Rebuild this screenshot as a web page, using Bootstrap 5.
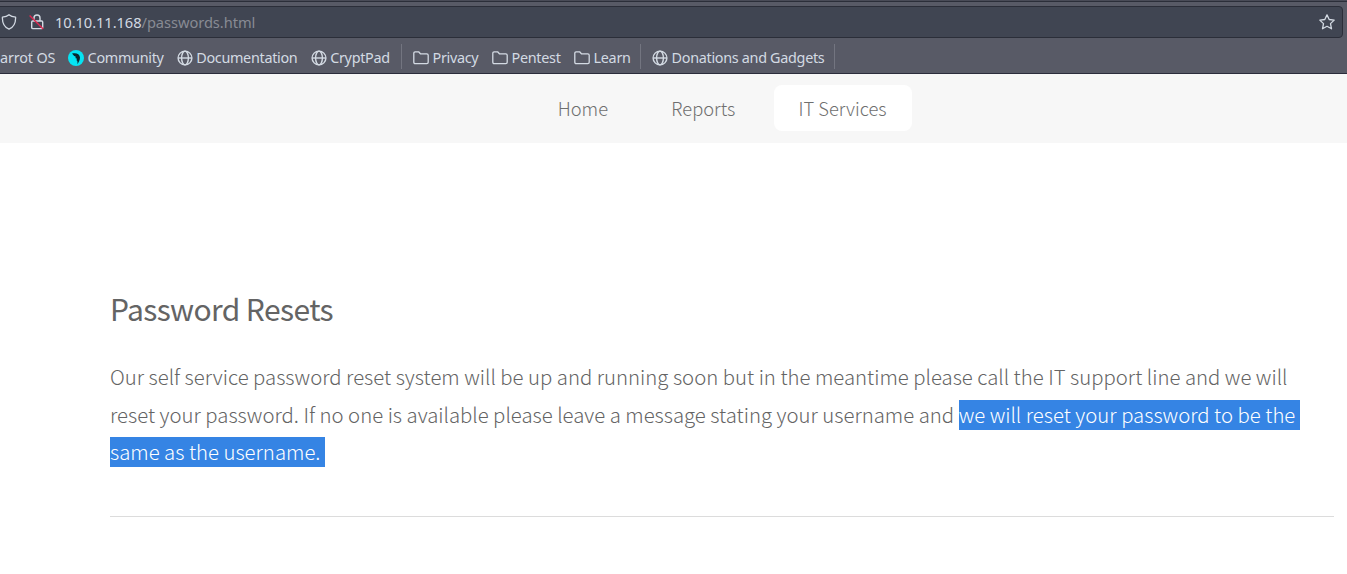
<!DOCTYPE html>
<html lang="en">
<head>
<meta charset="utf-8">
<meta name="viewport" content="width=device-width, initial-scale=1">
<title>Password Resets</title>
<link href="https://cdn.jsdelivr.net/npm/bootstrap@5.3.0/dist/css/bootstrap.min.css" rel="stylesheet">
<style>
body{background:#fff;overflow:hidden;height:574px}
.chrome{height:74px;background:#585a66;border-top:1px solid #494b57;border-bottom:1px solid #2b2c3b;font-family:"Noto Sans",sans-serif;color:#d3dae3}
.chrome svg{fill:none;stroke:#d3dae3;flex:none}
.edge{height:1px;background:#2b2e39}
.url{height:32px;margin:4px 4px 0 -6px;background:#404552;border:1px solid #2b2e39;border-radius:4px;font-size:14.67px;padding-left:6px;padding-right:7px}
.url .path{color:#888b94}
.lock{margin-left:12px}
.addr{margin-left:10px;letter-spacing:-.06px}
.marks{height:35px;padding-top:2px;font-size:14.4px;letter-spacing:-.31px;white-space:nowrap}
.marks .nav-link{gap:3.6px;padding:2px 0 0;line-height:20px;color:inherit;flex:none}
.sep{width:1px;height:25px;background:#737580;flex:none}
.sep + .nav-link{margin-left:11px}
.w1{width:68px;letter-spacing:-.15px}.w2{width:108.6px}.w3{width:134px}.w4{width:90.4px}.w5{width:79px}.w6{width:82px}.w7{width:66px}.w8{width:182px}
.sitenav{height:69px;background:#f7f7f7;font-family:"Noto Sans CJK SC",sans-serif;font-weight:300;font-size:18.33px;padding:0 0 2px 98px;gap:13.3px}
.sitenav .nav-link{color:#6f6f6f;height:46px;padding:0 25px;line-height:46px;border-radius:8px}
.sitenav .active{background:#fff;padding-right:25.7px}
.content{margin:0 13px 0 110px;font-family:"Noto Sans CJK SC",sans-serif;color:#646464}
.content h2{font-size:30px;font-weight:400;line-height:45px;margin:143px 0 0;letter-spacing:-.6px}
.content p{font-size:20.33px;font-weight:300;line-height:37.5px;margin:27px 0 0;white-space:pre}
.picked{padding-bottom:1px;background:linear-gradient(#3584e4,#3584e4) 0 100%/100% 30px no-repeat;color:#fff}
.content hr{margin:45px 0 0;opacity:1;border-top:1px solid #dcdcdc}
</style>
</head>
<body>
<svg class="d-none"><symbol id="globe" viewBox="0 0 16 16"><g stroke-width="1.4"><circle cx="8" cy="8" r="6.9"/><ellipse cx="8" cy="8" rx="3.4" ry="6.9"/><path d="M1.2 8h13.6"/></g></symbol>
<symbol id="folder" viewBox="0 0 16 16"><path stroke-width="1.3" stroke-linejoin="round" d="M.8 3.2Q.8 1.8 2.2 1.8H5.6L7.4 3.8H13.8Q15.2 3.8 15.2 5.2V12.2Q15.2 13.6 13.8 13.6H2.2Q.8 13.6.8 12.2Z"/></symbol></svg>
<header class="chrome">
<div class="edge"></div>
<div class="url d-flex align-items-center">
<svg width="16" height="16" viewBox="0 0 16 16"><path stroke-width="1.3" stroke-linejoin="round" d="M8 .8C9.8 2.4 12 3 14.6 3.2 14.8 8.6 12.6 13.2 8 15.2 3.4 13.2 1.2 8.6 1.4 3.2 4 3 6.2 2.4 8 .8Z"/></svg>
<svg class="lock" width="16" height="16" viewBox="0 0 16 16"><path stroke-width="1.4" d="M5 7V4a3 3 0 0 1 6 0v3M3.7 7h9q1 0 1 1v5.6q0 1-1 1h-9q-1 0-1-1V8q0-1 1-1Z"/><path stroke="#e22850" stroke-width="1.4" d="M.6 1.6 14.2 15"/></svg>
<span class="addr">10.10.11.168<span class="path">/passwords.html</span></span>
<svg class="ms-auto" width="16" height="16" viewBox="0 0 16 16"><path stroke-width="1.3" stroke-linejoin="round" d="M8 .9 10.2 5.5 15.2 6.1 11.5 9.6 12.5 14.8 8 12.3 3.5 14.8 4.5 9.6.8 6.1 5.8 5.5Z"/></svg>
</div>
<nav class="marks nav flex-nowrap align-items-center">
<a class="nav-link w1"><span>arrot OS</span></a>
<a class="nav-link d-flex align-items-center w2"><svg width="16" height="16" viewBox="0 0 16 16"><circle cx="8" cy="8" r="8" fill="#05e4f3" stroke="none"/><path fill="#07272f" stroke="none" d="M4 3.6C7.6 2.4 11.8 3.6 12 7.4 12 10 10.4 12.2 9.6 14.2 9.4 12 9.6 10.8 8.6 10.6L8.8 8.6 7.6 8.2 7.6 6.4 6.2 6Z"/></svg><span>Community</span></a>
<a class="nav-link d-flex align-items-center w3"><svg width="16" height="16"><use href="#globe"/></svg><span>Documentation</span></a>
<a class="nav-link d-flex align-items-center w4"><svg width="16" height="16"><use href="#globe"/></svg><span>CryptPad</span></a>
<div class="sep"></div>
<a class="nav-link d-flex align-items-center w5"><svg width="16" height="16"><use href="#folder"/></svg><span>Privacy</span></a>
<a class="nav-link d-flex align-items-center w6"><svg width="16" height="16"><use href="#folder"/></svg><span>Pentest</span></a>
<a class="nav-link d-flex align-items-center w7"><svg width="16" height="16"><use href="#folder"/></svg><span>Learn</span></a>
<div class="sep"></div>
<a class="nav-link d-flex align-items-center w8"><svg width="16" height="16"><use href="#globe"/></svg><span>Donations and Gadgets</span></a>
<div class="sep"></div>
</nav>
</header>
<nav class="sitenav nav justify-content-center align-items-center">
<a class="nav-link">Home</a><a class="nav-link">Reports</a><a class="nav-link active">IT Services</a>
</nav>
<main class="content">
<h2>Password Resets</h2>
<p>Our self service password reset system will be up and running soon but in the meantime please call the IT support line and we will<br>reset your password. If no one is available please leave a message stating your username and <span class="picked">we will reset your password to be the </span><br><span class="picked">same as the username. </span></p>
<hr>
</main>
<script src="https://cdn.jsdelivr.net/npm/bootstrap@5.3.0/dist/js/bootstrap.bundle.min.js"></script>
</body>
</html>
